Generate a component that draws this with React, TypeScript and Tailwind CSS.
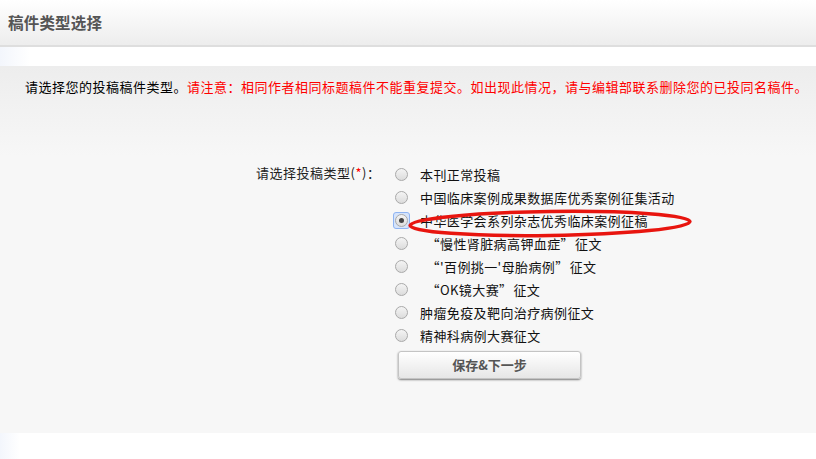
import React from "react";

const Q1 = () => <span className="inline-block w-[20px] text-right">“</span>;
const Q2 = () => <span className="mr-[1px]">”</span>;

const options: React.ReactNode[] = [
  "本刊正常投稿",
  "中国临床案例成果数据库优秀案例征集活动",
  "中华医学会系列杂志优秀临床案例征稿",
  <>
    <Q1 />慢性肾脏病高钾血症<Q2 />征文
  </>,
  <>
    <Q1 />'百例挑一'母胎病例<Q2 />征文
  </>,
  <>
    <Q1 />OK镜大赛<Q2 />征文
  </>,
  "肿瘤免疫及靶向治疗病例征文",
  "精神科病例大赛征文",
];

function Radio({ checked }: { checked: boolean }) {
  return (
    <span
      className={
        "relative flex h-[17px] w-[17px] items-center justify-center " +
        (checked ? "rounded-[3px] border border-[#8fb4f2] bg-[#d6e4fb]" : "border border-transparent")
      }
    >
      <span className="flex h-[13px] w-[13px] items-center justify-center rounded-full border border-[#a9a9a9] bg-[linear-gradient(#f4f4f4,#dcdcdc)]">
        {checked && <span className="h-[5px] w-[5px] rounded-full bg-[#444]" />}
      </span>
    </span>
  );
}

export default function App() {
  return (
    <div className="h-[459px] w-[816px] bg-white text-[13px] text-black [font-family:'Noto_Sans_CJK_SC','Liberation_Sans',sans-serif]">
      <div className="flex h-[47px] items-center border-b-2 border-[#dedede] bg-[linear-gradient(#ffffff,#ededed)] pl-[8px]">
        <span className="text-[15.5px] font-bold tracking-[0.2px] text-[#555]">稿件类型选择</span>
      </div>
      <div className="h-[19px] bg-[linear-gradient(90deg,#f3f6fc,#ffffff_30px)]" />
      <div className="relative h-[367px] bg-[linear-gradient(#ededed,#f7f7f7_90px)]">
        <div className="pl-[25px] pt-[11px] leading-[20px] tracking-[0.5px]">
          <span>请选择您的投稿稿件类型。</span>
          <span className="text-[#ff0000]">请注意：相同作者相同标题稿件不能重复提交。如出现此情况，请与编辑部联系删除您的已投同名稿件。</span>
        </div>
        <div className="mt-[66px] flex">
          <div className="w-[256px]" />
          <div className="w-[137px] pt-[1px] leading-[18px] tracking-[0.5px] text-[#222]">
            请选择投稿类型(<span className="text-[#ff0000]">*</span>)：
          </div>
          <div className="flex flex-col">
            {options.map((o, i) => (
              <div key={i} className="flex h-[23px] items-center">
                <Radio checked={i === 2} />
                <span className="ml-[10px] tracking-[0.4px] text-[#111]">{o}</span>
              </div>
            ))}
            <button className="ml-[5px] mt-[4px] h-[28px] w-[183px] rounded-[3px] border border-[#c4c4c4] bg-[linear-gradient(#ffffff,#e6e6e6)] text-[13px] font-bold text-[#555] shadow-[0_1px_2px_rgba(0,0,0,0.5)]">
              保存&amp;下一步
            </button>
          </div>
        </div>
        <svg className="absolute left-[405px] top-[141px]" width="292" height="34" viewBox="0 0 292 34">
          <ellipse cx="145" cy="16.5" rx="140" ry="12" fill="none" stroke="#e8150f" strokeWidth="3.5" transform="rotate(-0.8 145 16.5)" />
        </svg>
      </div>
      <div className="h-[26px] bg-[linear-gradient(90deg,#f3f6fc,#ffffff_20px)]" />
    </div>
  );
}
